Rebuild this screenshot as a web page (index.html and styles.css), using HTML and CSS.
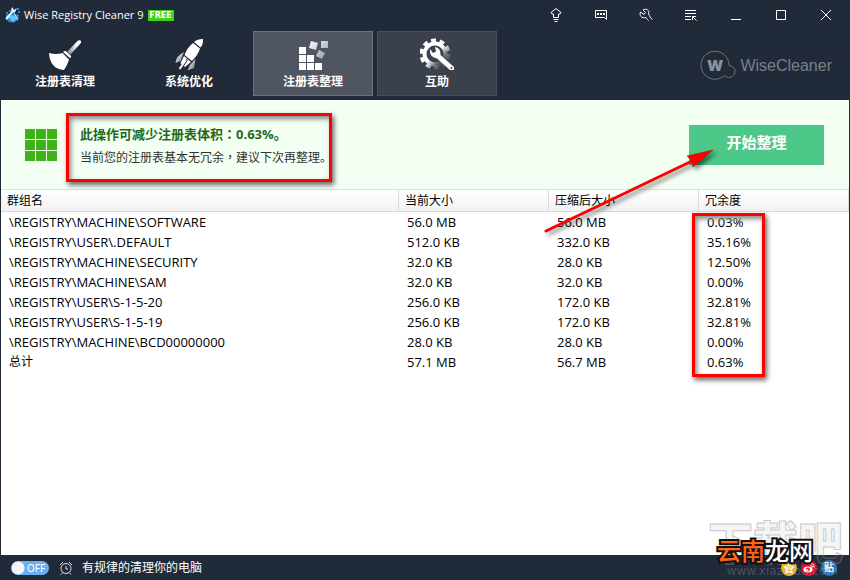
FILE: index.html
```html
<!DOCTYPE html>
<html lang="zh-CN">
<head>
    <meta charset="UTF-8">
    <meta name="viewport" content="width=device-width, initial-scale=1.0">
    <title>Wise Registry Cleaner 9</title>
    <link rel="stylesheet" href="styles.css">
</head>
<body>
    <header class="header">
        <div class="titlebar">
            <svg class="app-icon" width="16" height="16" viewBox="0 0 16 16">
                <path d="M1 8 L4 7 L10 7 L14 8 L13 13 L9 15.500 L4 15 L1 12Z" fill="#2490dc"/>
                <path d="M3 10 L8 8 L12 11 L8 15Z" fill="#64c4f7"/>
                <path d="M4 3h2v2H4zM11 1h3v2h-3zM13 4h2v2h-2zM1 5h2v2H1z" fill="#2b86c8"/>
                <path d="M1 12 L9 3" stroke="#e9f7ff" stroke-width="2"/>
                <path d="M8 4 L13 13" stroke="#cfeaff" stroke-width="1"/>
                <path d="M6 2 L8 0 L8 2 L10 3 L11 1 L11 4 L9 5.500 L7 5Z" fill="#e9f7ff"/>
            </svg>
            <span class="app-name">Wise Registry Cleaner 9</span>
            <span class="free">FREE</span>
            <div class="window-buttons">
                <button aria-label="Upgrade"><svg width="16" height="16" viewBox="0 0 16 16"><path d="M8 1.500 L13 5.500 L12 7 H10.500 V10.500 H5.500 V7 H4 L3 5.500Z M5.500 12.500h5 M6.500 14.500h3"/></svg></button>
                <button aria-label="Feedback"><svg width="16" height="16" viewBox="0 0 16 16"><path d="M2.500 3.500h11v9l-2-2h-9z"/><path d="M4 7h2M7 7h2M10 7h2" stroke-width="2"/></svg></button>
                <button aria-label="Tools"><svg width="16" height="16" viewBox="0 0 16 16"><path d="M5 3 L7.500 5.500 L6 7.500 L2.500 5 C1 8 3.500 12 8 10.500 C9 12 10 13 10.500 13.500 M5 3 C8 1 12 3 10.500 7 C12 9 12 11 14.500 12.500"/></svg></button>
                <button aria-label="Menu"><svg width="16" height="16" viewBox="0 0 16 16"><path d="M2 3.500h11M2 6.500h11M2 9.500h6M2 12.500h6M9.500 13V9.500H13M9.500 9.500l4 4"/></svg></button>
                <button aria-label="Minimize"><svg width="16" height="16" viewBox="0 0 16 16"><path d="M3 12.500h10"/></svg></button>
                <button aria-label="Maximize"><svg width="16" height="16" viewBox="0 0 16 16"><path d="M3.500 3.500h9v9h-9z"/></svg></button>
                <button aria-label="Close"><svg width="16" height="16" viewBox="0 0 16 16"><path d="M3 3l10 10M13 3L3 13"/></svg></button>
            </div>
        </div>

        <div class="toolbar">
            <nav class="tabs">
                <button class="tab">
                    <svg width="34" height="34" viewBox="0 0 34 34">
                        <defs><linearGradient id="handle" x1="1" y1="0" x2="0" y2="1"><stop offset="0.3" stop-color="#fff"/><stop offset="1" stop-color="#777d87"/></linearGradient></defs>
                        <path d="M19.500 15.500 L29 5.500 Q30.500 3.500 32.500 4.500 Q34 6 32 8 L22.500 18.500Z" fill="url(#handle)"/>
                        <path d="M15 16 Q17 14 19 16 L23 20 Q23.500 21.500 22 22Z" fill="#fff"/>
                        <path d="M1 17 Q8 19 14.500 17 L21 23.500 Q19.500 29 16 34 Q2 33 1 17Z" fill="#fff"/>
                    </svg>
                    <span>注册表清理</span>
                </button>
                <button class="tab">
                    <svg width="34" height="34" viewBox="0 0 34 34">
                        <defs><linearGradient id="fin" x1="0" y1="0" x2="1" y2="1"><stop offset="0" stop-color="#fff"/><stop offset="1" stop-color="#6b717c"/></linearGradient></defs>
                        <path d="M31 3 Q25 3 22 6 L28.500 11.500 Q31.500 8 31 3Z" fill="#fff"/>
                        <path d="M21 7 Q15 12 12.500 19 L20 25 Q26 19 28 12.500Z" fill="#fff"/>
                        <path d="M12 20 L8.500 27 L10 28.500 L14 23 L16 24 L12 30 L13 31 L19 26Z" fill="#fff"/>
                        <path d="M12 16 Q4 20 3.500 27 L8.500 25Z" fill="url(#fin)"/>
                        <path d="M23.500 23 L22 32 L15.500 34.500 L18 29Z" fill="url(#fin)"/>
                        <path d="M14 24 L7.500 33" stroke="#fff" stroke-width="2"/>
                    </svg>
                    <span>系统优化</span>
                </button>
                <button class="tab active">
                    <svg width="34" height="34" viewBox="0 0 34 34">
                        <defs><linearGradient id="cube" x1="0" y1="0" x2="1" y2="1"><stop offset="0" stop-color="#fff"/><stop offset="1" stop-color="#8c9199"/></linearGradient></defs>
                        <path d="M3 11h7v7H3zM3 19h7v7H3zM3 27h7v7H3zM11 19h7v7h-7zM11 27h7v7h-7zM19 27h7v7h-7z" fill="#fff"/>
                        <path d="M15 5l7 2-2 7-7-2zM25 5h7v7h-7zM23 14l6 3-3 6-6-3z" fill="url(#cube)"/>
                    </svg>
                    <span>注册表整理</span>
                </button>
                <button class="tab raised">
                    <svg width="34" height="34" viewBox="0 0 34 34">
                        <defs><linearGradient id="gear" x1="0" y1="0" x2="1" y2="1"><stop offset="0.5" stop-color="#fff"/><stop offset="0.8" stop-color="#555b66"/></linearGradient></defs>
                        <circle cx="15" cy="18" r="10.500" fill="none" stroke="url(#gear)" stroke-width="4"/>
                        <circle cx="15" cy="18" r="13.500" fill="none" stroke="url(#gear)" stroke-width="4" stroke-dasharray="4.800 3.680"/>
                        <path d="M10 13 L13 17 L16 15.500 L15 11 Q21 12 20.500 19 L34 31 Q35 35 30.500 34.500 L17 22.500 Q9 21 10 13Z" fill="#fff"/>
                        <circle cx="31.500" cy="32" r="1" fill="#3a404c"/>
                    </svg>
                    <span>互助</span>
                </button>
            </nav>
            <div class="brand">
                <svg width="36" height="32" viewBox="0 0 36 32">
                    <path d="M29 15.500 A14 14 0 1 0 24.500 25.500 A6 6 0 1 0 29 15.500" fill="none" stroke="#6f7580"/>
                    <text x="15" y="21" text-anchor="middle" class="brand-letter">W</text>
                </svg>
                <span>WiseCleaner</span>
            </div>
        </div>
    </header>

    <main class="content">
        <section class="banner">
            <svg class="grid-icon" width="32" height="32" viewBox="0 0 32 32">
                <path d="M0 0h10v10H0zM11 0h10v10H11zM22 0h10v10H22zM0 11h10v10H0zM11 11h10v10H11zM22 11h10v10H22zM0 22h10v10H0zM11 22h10v10H11zM22 22h10v10H22z" fill="#40b018"/>
            </svg>
            <div class="message">
                <h1>此操作可减少注册表体积<span class="mid" lang="zh-TW">：</span>0.63%。</h1>
                <p>当前您的注册表基本无冗余<span class="mid" lang="zh-TW">，</span>建议下次再整理。</p>
            </div>
            <button class="start">开始整理</button>
            <svg class="arrow" width="180" height="96" viewBox="0 0 180 96">
                <path d="M6 85 L152 15" stroke="#f00" stroke-width="3" stroke-linecap="round"/>
                <path d="M173 4 L147 10 L152 15 L153 21Z" fill="#f00" stroke="#a01010" stroke-width="0.500"/>
            </svg>
        </section>

        <div class="list">
            <table>
                <thead>
                    <tr><th>群组名</th><th class="size">当前大小</th><th class="size">压缩后大小</th><th class="size">冗余度</th></tr>
                </thead>
                <tbody>
                    <tr><td>\REGISTRY\MACHINE\SOFTWARE</td><td>56.0 MB</td><td>56.0 MB</td><td>0.03%</td></tr>
                    <tr><td>\REGISTRY\USER\.DEFAULT</td><td>512.0 KB</td><td>332.0 KB</td><td>35.16%</td></tr>
                    <tr><td>\REGISTRY\MACHINE\SECURITY</td><td>32.0 KB</td><td>28.0 KB</td><td>12.50%</td></tr>
                    <tr><td>\REGISTRY\MACHINE\SAM</td><td>32.0 KB</td><td>32.0 KB</td><td>0.00%</td></tr>
                    <tr><td>\REGISTRY\USER\S-1-5-20</td><td>256.0 KB</td><td>172.0 KB</td><td>32.81%</td></tr>
                    <tr><td>\REGISTRY\USER\S-1-5-19</td><td>256.0 KB</td><td>172.0 KB</td><td>32.81%</td></tr>
                    <tr><td>\REGISTRY\MACHINE\BCD00000000</td><td>28.0 KB</td><td>28.0 KB</td><td>0.00%</td></tr>
                    <tr><td class="total">总计</td><td>57.1 MB</td><td>56.7 MB</td><td>0.63%</td></tr>
                </tbody>
            </table>
            <div class="mark"></div>
        </div>
    </main>

    <footer class="footer">
        <label class="switch">
            <input type="checkbox" aria-label="有规律的清理你的电脑">
            <span>OFF</span>
        </label>
        <svg class="alarm" width="14" height="14" viewBox="0 0 14 14">
            <circle cx="7" cy="7.500" r="5"/>
            <path d="M7 5v3h2M1 4L4 1M13 4L10 1M4 11.500L2 13.500M10 11.500l2 2"/>
        </svg>
        <span>有规律的清理你的电脑</span>
        <div class="social">
            <a href="#" aria-label="Qzone"><svg width="16" height="16" viewBox="0 0 16 16"><circle cx="8" cy="8" r="8" fill="#e8b51f"/><path d="M8 2l2 4 4 .5-3 3 1 4.500-4-2-4 2 1-4.500-3-3L6 6z" fill="#fff"/><path d="M5.500 7h5l-4 3.500h4" fill="none" stroke="#e8b51f"/></svg></a>
            <a href="#" aria-label="Weibo"><svg width="16" height="16" viewBox="0 0 16 16"><circle cx="8" cy="8" r="8" fill="#d8152b"/><ellipse cx="7" cy="9.500" rx="4.500" ry="3" fill="#fff"/><circle cx="7" cy="9.500" r="2" fill="#d8152b"/><circle cx="6.500" cy="10" r="1" fill="#fff"/><path d="M9.500 3.500q4 0 3.500 4M9.500 5.500q2 0 2 2" fill="none" stroke="#fff"/></svg></a>
            <a href="#" class="tieba">贴</a>
        </div>
    </footer>

    <div class="watermark">
        <div class="site">下载吧</div>
        <div class="url">www.xiazaiba.com</div>
        <div class="stamp"><span>云南</span>龙网</div>
    </div>
</body>
</html>
```
FILE: styles.css
```css
* {
    box-sizing: border-box;
}
body {
    margin: 0;
    min-height: 100vh;
    display: flex;
    flex-direction: column;
    position: relative;
    background: #212a38;
    color: #000;
    font: 12px/20px "Open Sans", "Noto Sans CJK SC", sans-serif;
}
button {
    padding: 0;
    border: none;
    background: none;
    color: #fff;
    font-family: inherit;
}

/* Header */
.header {
    height: 100px;
    color: #fff;
}
.titlebar {
    height: 30px;
    margin-bottom: 1px;
    padding: 0 2px 0 5px;
    display: flex;
    align-items: center;
}
.app-name {
    margin-left: 3px;
    font-size: 11px;
}
.free {
    margin-left: 4px;
    width: 26px;
    background: #3fd01c;
    font: bold 8px/11px "DejaVu Sans", sans-serif;
    text-align: center;
}
.window-buttons {
    margin-left: auto;
    display: flex;
}
.window-buttons button {
    width: 45px;
    height: 30px;
}
.window-buttons svg {
    display: block;
    margin: 0 auto;
    fill: none;
    stroke: #fff;
}
.toolbar {
    display: flex;
    justify-content: space-between;
    padding: 0 18px 0 5px;
}
.tabs {
    display: flex;
    gap: 4px;
}
.tab {
    width: 120px;
    height: 65px;
    display: flex;
    flex-direction: column;
    align-items: center;
    padding-top: 4px;
    border: 1px solid transparent;
    font-size: 12px;
    font-weight: bold;
    line-height: 20px;
}
.tab span {
    margin-top: 2px;
}
.tab.active {
    background: #505661;
    border-color: #6d737d;
}
.tab.raised {
    background: #3a404c;
    border-color: #4a505b;
}
.brand {
    display: flex;
    align-items: center;
    gap: 4px;
    padding-top: 4px;
    color: #7b808a;
    font: 16px/20px "Liberation Sans", sans-serif;
}
.brand-letter {
    font: 900 15px Inter, sans-serif;
    fill: #8b9099;
}

/* Content */
.content {
    flex: 1;
    position: relative;
    z-index: 0;
    margin: 0 1px;
    background: #fff;
}
.banner {
    height: 89px;
    display: flex;
    align-items: center;
    position: relative;
    padding: 0 25px 0 24px;
    background: #f3fff3;
}
.message {
    height: 69px;
    margin: 6px 0 0 9px;
    padding: 7px 0 0 11px;
    width: 266px;
    border: 3px solid #f00;
    box-shadow: 2px 3px 5px #666, inset 2px 3px 5px #888;
    white-space: nowrap;
}
.message h1 {
    margin: 0;
    color: #1f6a1a;
    font-size: 13px;
    line-height: 22px;
}
.message p {
    margin: 2px 0 0;
    color: #333;
}
.mid {
    font-family: "Noto Sans CJK TC", sans-serif;
}
.start {
    width: 135px;
    height: 40px;
    margin-left: auto;
    padding-bottom: 6px;
    background: #4cc988;
    font-size: 15px;
    font-weight: bold;
}
.arrow {
    position: absolute;
    top: 46px;
    right: 129px;
    fill: none;
    filter: drop-shadow(3px 3px 2px rgba(0, 0, 0, 0.5));
}

/* Table */
.list {
    position: relative;
    z-index: -1;
}
table {
    width: 100%;
    border-collapse: separate;
    border-spacing: 0;
    table-layout: fixed;
}
th {
    height: 23px;
    padding: 0 6px;
    background: linear-gradient(#fff, #f2f2f2);
    border-top: 1px solid #d2e6d2;
    border-bottom: 1px solid #d9d9d9;
    border-right: 1px solid #dcdcdc;
    font-weight: normal;
    line-height: 20px;
    text-align: left;
}
th.size {
    width: 150px;
}
td {
    height: 20px;
    padding: 0 8px;
    font-size: 13px;
    white-space: nowrap;
}
td.total {
    font-size: 12px;
}
.mark {
    position: absolute;
    top: 24px;
    right: 84px;
    width: 73px;
    height: 164px;
    border: 3px solid #f00;
    box-shadow: 2px 3px 5px #666, inset 2px 3px 5px #888;
}

/* Footer */
.footer {
    height: 25px;
    display: flex;
    align-items: center;
    padding: 0 13px 0 11px;
    color: #fff;
}
.switch {
    position: relative;
    display: flex;
}
.switch input {
    appearance: none;
    width: 38px;
    height: 14px;
    margin: 0;
    border-radius: 7px;
    background: radial-gradient(circle at 7px 7px, #f4f4f4 6px, #68b0f0 7px);
}
.switch span {
    position: absolute;
    left: 16px;
    top: 0;
    font: 10px/14px "Noto Sans", sans-serif;
}
.alarm {
    margin: 0 9px 0 10px;
    fill: none;
    stroke: #dfe2e6;
}
.social {
    margin-left: auto;
    display: flex;
    gap: 4px;
}
.social svg {
    display: block;
}
.tieba {
    width: 16px;
    height: 16px;
    border-radius: 8px;
    background: #2873b8;
    color: #fff;
    font-size: 10px;
    font-weight: bold;
    line-height: 15px;
    text-align: center;
    text-decoration: none;
}

/* Watermark */
.watermark {
    position: absolute;
    right: 4px;
    bottom: 0;
    width: 138px;
    height: 66px;
    pointer-events: none;
    font-family: "Noto Sans CJK SC", sans-serif;
    white-space: nowrap;
}
.site {
    color: rgba(150, 150, 150, 0.1);
    font-size: 45px;
    font-weight: 900;
    line-height: 54px;
    -webkit-text-stroke: 1px rgba(150, 150, 150, 0.5);
}
.url {
    position: absolute;
    right: 8px;
    bottom: 0;
    color: rgba(170, 180, 190, 0.3);
    font: 12px/18px "DejaVu Sans", sans-serif;
}
.stamp {
    position: absolute;
    left: 9px;
    top: 19px;
    color: #fff;
    font-size: 24px;
    font-weight: 500;
    line-height: 34px;
    -webkit-text-stroke: 4px #111;
    paint-order: stroke fill;
}
.stamp span {
    color: #ff6414;
}
```
